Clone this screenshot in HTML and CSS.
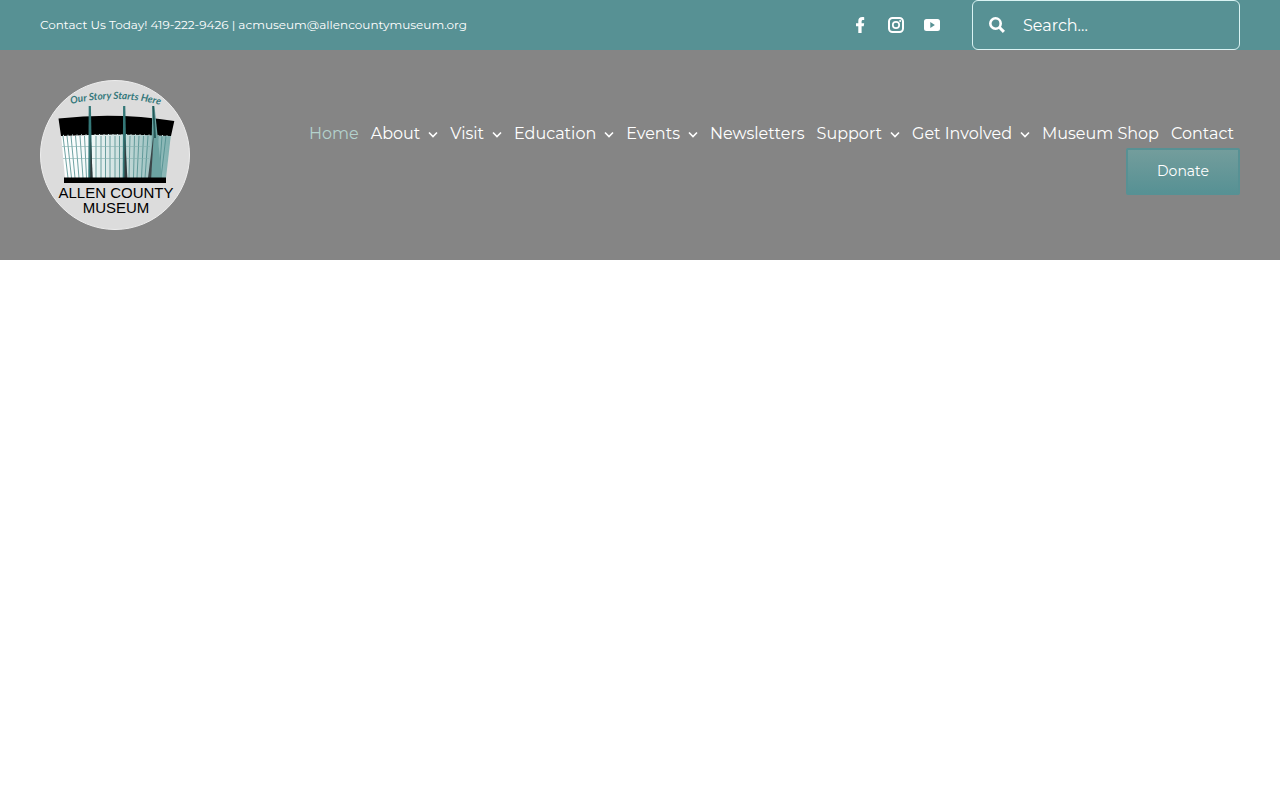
FILE: index.html
```html
<!DOCTYPE html>
<html lang="en">
<head>
<meta charset="utf-8">
<meta name="viewport" content="width=device-width, initial-scale=1">
<title>Allen County Museum</title>
<link rel="stylesheet" href="styles.css">
</head>
<body>
<header>
  <div class="topbar">
    <p class="contact">Contact Us Today! 419-222-9426 | <a href="mailto:acmuseum@allencountymuseum.org">acmuseum@allencountymuseum.org</a></p>
    <div class="social">
      <a href="#" aria-label="Facebook"><svg viewBox="0 0 16 16"><path fill="currentColor" d="M9.600 16V9.300h2.100l.5-3.100H9.600V4.700c0-1 .4-1.600 1.500-1.600h1.100V.2C11.700.1 11.100 0 10.300 0 7.700 0 6.300 1.500 6.300 4.100v2.100H4v3.100h2.300V16z"/></svg></a>
      <a href="#" aria-label="Instagram"><svg viewBox="0 0 16 16"><rect x="1" y="1" width="14" height="14" rx="3.500" fill="none" stroke="currentColor" stroke-width="2"/><circle cx="8" cy="8" r="3.200" fill="none" stroke="currentColor" stroke-width="1.700"/><circle cx="12.100" cy="3.900" r="1" fill="currentColor"/></svg></a>
      <a href="#" aria-label="YouTube"><svg viewBox="0 0 16 16"><path fill="currentColor" fill-rule="evenodd" d="M2.500 2h11Q16 2 16 4.500v7q0 2.500-2.500 2.500h-11Q0 14 0 11.500v-7Q0 2 2.500 2zM6.300 5v6l4.600-3z"/></svg></a>
    </div>
    <form class="search" role="search">
      <button type="submit" aria-label="Search"><svg viewBox="0 0 16 16" fill="none" stroke="currentColor"><circle cx="6.500" cy="6.500" r="5.200" stroke-width="2.600"/><path d="M10.300 10.300l4.600 4.600" stroke-width="3"/></svg></button>
      <input type="search" placeholder="Search..." aria-label="Search the site">
    </form>
  </div>
  <div class="masthead">
    <a class="logo" href="#" aria-label="Allen County Museum home">
      <svg viewBox="0 0 150 150">
        <defs>
          <linearGradient id="glass" x1="0" x2="1"><stop offset="0" stop-color="#fff"/><stop offset=".25" stop-color="#f4fafa"/><stop offset=".6" stop-color="#c3d9d8"/><stop offset="1" stop-color="#7fb0af"/></linearGradient>
          <path id="arc" d="M31 24Q77 13 125 26"/>
        </defs>
        <circle cx="75" cy="75" r="74.500" fill="#dcdcdc" stroke="#eee"/>
        <path fill="url(#glass)" d="M21 54H131L126 98H25z"/>
        <path fill="none" stroke="#4b8c8b" stroke-width=".8" d="M23 56l5 42M27 56l4.500 42M31 56l4 42M35.500 56l3.500 42M40 56l3 42M44.500 56l2 42M56 56v42M61 56v42M65.500 56v42M70 56v42M75 56v42M79.500 56v42M90 56l-1 42M94.500 56l-1 42M99 56l-2 42M103.500 56l-2 42M108 56l-3 42M118 56l-2 42M122 56l-3 42M126 56l-5 42"/>
        <path fill="none" stroke="#82aeac" stroke-width=".6" d="M22 66.500H110M23 78.500H109"/>
        <path d="M18.500 38.500Q77 32 134.300 41L131 56Q77 53 21 56z"/>
        <path fill="none" stroke="#c8dddd" stroke-width="1.200" stroke-dasharray="1 3.500" d="M23 55.500Q77 53.500 130 56"/>
        <path fill="#347777" d="M48.700 26h2.200l1.400 72h-4z"/><path fill="#333b3d" d="M50.700 54l2 44h-2.500z"/>
        <path fill="#347777" d="M83.100 26h2.200l1.400 72h-4z"/><path fill="#333b3d" d="M84.700 54l2.700 44h-3z"/>
        <path fill="#6ba2a1" d="M112.300 26h2.200L122 98h-11z"/><path fill="#3c4649" d="M114 50l-2.800 48h-3.200z"/><path fill="#245958" d="M112.300 26h1.700l2 32h-2z"/>
        <path d="M24 97.500H126V103H24z"/>
        <text class="logo-motto"><textPath href="#arc">Our Story Starts Here</textPath></text>
        <text class="logo-name" x="76" y="118">ALLEN COUNTY</text>
        <text class="logo-name" x="76" y="133">MUSEUM</text>
      </svg>
    </a>
    <nav aria-label="Main">
      <ul>
        <li><a class="current" href="#" aria-current="page">Home</a></li>
        <li><a href="#">About<svg viewBox="0 0 10 8"><path d="M1 2.500l4 4 4-4"/></svg></a></li>
        <li><a href="#">Visit<svg viewBox="0 0 10 8"><path d="M1 2.500l4 4 4-4"/></svg></a></li>
        <li><a href="#">Education<svg viewBox="0 0 10 8"><path d="M1 2.500l4 4 4-4"/></svg></a></li>
        <li><a href="#">Events<svg viewBox="0 0 10 8"><path d="M1 2.500l4 4 4-4"/></svg></a></li>
        <li><a href="#">Newsletters</a></li>
        <li><a href="#">Support<svg viewBox="0 0 10 8"><path d="M1 2.500l4 4 4-4"/></svg></a></li>
        <li><a href="#">Get Involved<svg viewBox="0 0 10 8"><path d="M1 2.500l4 4 4-4"/></svg></a></li>
        <li><a href="#">Museum Shop</a></li>
        <li><a href="#">Contact</a></li>
      </ul>
      <a class="donate" href="#">Donate</a>
    </nav>
  </div>
</header>
</body>
</html>
```
FILE: styles.css
```css
* { box-sizing: border-box; }
body { margin: 0; background: #fff; color: #fff; font-family: Montserrat, Inter, sans-serif; font-size: 16px; }
a { color: inherit; text-decoration: none; }
svg { display: block; }
.topbar { display: flex; align-items: center; min-height: 50px; padding: 0 40px; background: #579194; }
.contact { margin: 0 auto 0 0; font-size: 12px; line-height: 20px; }
.social { display: flex; gap: 20px; margin-right: 32px; }
.social svg { width: 16px; height: 16px; }
.search { display: flex; align-items: center; width: 268px; height: 50px; border: 1px solid #d9f3f3; border-radius: 6px; }
.search button { flex: none; width: 50px; height: 48px; padding: 0 16px; border: 0; background: none; color: #fff; }
.search button svg { width: 16px; height: 16px; }
.search input { flex: 1; min-width: 0; height: 48px; padding: 0; border: 0; outline: 0; background: none; color: #fff; font: inherit; }
.search input::placeholder { color: #fff; opacity: 1; }
.masthead { display: flex; align-items: center; justify-content: space-between; gap: 40px; padding: 30px 40px; background: #858585; }
.logo { flex: none; width: 150px; }
.logo-motto { font: italic 700 10px Lato, sans-serif; fill: #35787b; }
.logo-name { font: 15px "Liberation Sans", Arial, sans-serif; text-anchor: middle; fill: #000; }
nav { display: flex; flex-direction: column; align-items: flex-end; }
nav ul { display: flex; flex-wrap: wrap; justify-content: flex-end; margin: 0; padding: 0; list-style: none; }
nav li a { display: flex; align-items: center; gap: 8px; padding: 4px 6px 0; line-height: 28px; white-space: nowrap; }
nav li svg { width: 10px; height: 8px; fill: none; stroke: currentColor; stroke-width: 1.6; }
nav .current { color: #b4d2cd; }
.donate { padding: 11px 29px; border: 2px solid #579194; border-radius: 2px; background: linear-gradient(#739d9c, #579194); font-size: 14px; line-height: 21px; }
```
